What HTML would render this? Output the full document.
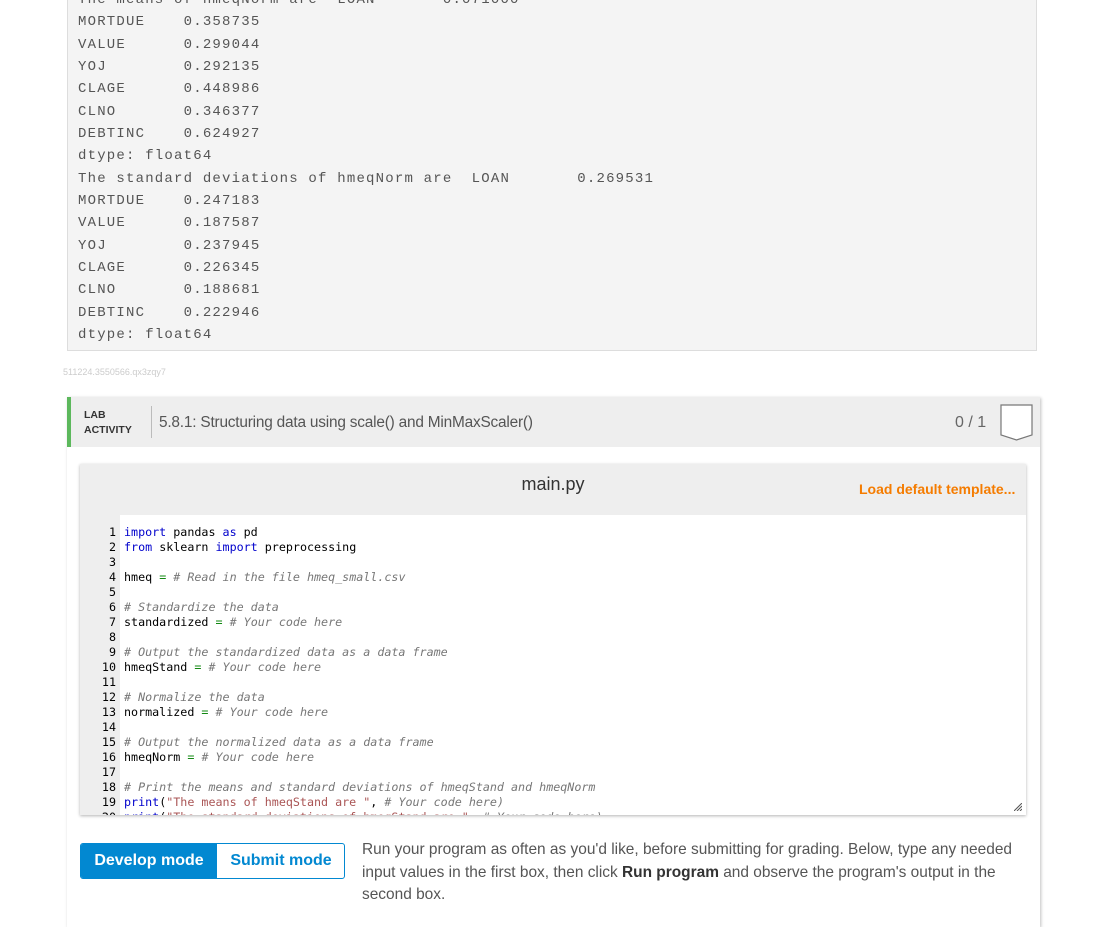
<!DOCTYPE html>
<html><head><meta charset="utf-8"><style>
*{box-sizing:border-box;margin:0;padding:0}
body{width:1101px;height:913px;overflow:hidden;background:#fff;font-family:"Liberation Sans",Roboto,sans-serif;position:relative}
.out{position:absolute;left:67px;top:-12px;width:970px;height:363px;background:#f4f4f4;border:1px solid #ddd;}
.out pre{position:absolute;left:10px;top:0;font-family:"Liberation Mono",monospace;font-size:14px;letter-spacing:1.2px;line-height:22.35px;color:#555;}
.id{position:absolute;left:63px;top:367px;font-size:9px;color:#ccc}
.lab{position:absolute;left:67px;top:397px;width:973px;height:530px;background:#fff;box-shadow:1px 1px 3px rgba(0,0,0,.25)}
.labh{height:50px;background:#eee;border-left:4px solid #5cb85c;position:relative}
.lbl{position:absolute;left:13px;top:11px;font-size:10.5px;font-weight:bold;color:#333;line-height:15px}
.sep{position:absolute;left:80px;top:9px;width:1px;height:32px;background:#bbb}
.title{position:absolute;left:88px;top:17px;font-size:15.4px;color:#555;letter-spacing:-0.2px}
.score{position:absolute;left:884px;top:17px;font-size:16px;color:#666}
.badge{position:absolute;left:929px;top:7px}
.ed{position:absolute;left:13px;top:67px;width:946px;height:351px;background:#eee;box-shadow:0 1px 3px rgba(0,0,0,.3)}
.edh{height:51px;position:relative}
.fn{position:absolute;left:0;right:0;top:10px;text-align:center;font-size:18px;color:#333}
.ld{position:absolute;left:779px;top:17px;font-size:14px;font-weight:bold;color:#f57c00}
.code{position:absolute;left:0;top:51px;width:946px;height:300px;background:#fff;overflow:hidden}
.code pre{position:absolute;top:0;padding-top:10px;font-family:"DejaVu Sans Mono",monospace;font-size:11.7px;line-height:15px;color:#000}
.ln{left:0;width:40px;height:300px;padding-right:4px;text-align:right;color:#222;background:#eee}
.src{left:44px}
.k{color:#00c}.c{color:#777;font-style:italic}.o{color:#181}.s{color:#a55}
.btns{position:absolute;left:13px;top:446px;width:265px;height:36px;border:1px solid #0288d1;border-radius:3px;overflow:hidden;font-size:16px;font-weight:bold}
.b1{position:absolute;left:0;top:0;width:136px;height:34px;background:#0288d1;color:#fff;text-align:center;line-height:34px}
.b2{position:absolute;left:136px;top:0;width:128px;height:34px;color:#0288d1;text-align:center;line-height:34px}
.desc{position:absolute;left:295px;top:442px;white-space:nowrap;font-size:15.45px;line-height:22.5px;color:#555}
</style></head><body>
<div class="out"><pre>The means of hmeqNorm are  LOAN       0.071000
MORTDUE    0.358735
VALUE      0.299044
YOJ        0.292135
CLAGE      0.448986
CLNO       0.346377
DEBTINC    0.624927
dtype: float64
The standard deviations of hmeqNorm are  LOAN       0.269531
MORTDUE    0.247183
VALUE      0.187587
YOJ        0.237945
CLAGE      0.226345
CLNO       0.188681
DEBTINC    0.222946
dtype: float64</pre></div>
<div class="id">511224.3550566.qx3zqy7</div>
<div class="lab">
 <div class="labh">
  <div class="lbl">LAB<br>ACTIVITY</div><div class="sep"></div>
  <div class="title">5.8.1: Structuring data using scale() and MinMaxScaler()</div>
  <div class="score">0 / 1</div>
  <svg class="badge" width="34" height="38" viewBox="0 0 34 38"><path d="M1 1H32V31L16.5 36L1 31Z" fill="#fff" stroke="#777" stroke-width="1.2"/></svg>
 </div>
 <div class="ed">
  <div class="edh"><div class="fn">main.py</div><div class="ld">Load default template...</div></div>
  <div class="code">
<pre class="ln">1
2
3
4
5
6
7
8
9
10
11
12
13
14
15
16
17
18
19
20</pre>
<pre class="src"><span class="k">import</span> pandas <span class="k">as</span> pd
<span class="k">from</span> sklearn <span class="k">import</span> preprocessing

hmeq <span class="o">=</span> <span class="c"># Read in the file hmeq_small.csv</span>

<span class="c"># Standardize the data</span>
standardized <span class="o">=</span> <span class="c"># Your code here</span>

<span class="c"># Output the standardized data as a data frame</span>
hmeqStand <span class="o">=</span> <span class="c"># Your code here</span>

<span class="c"># Normalize the data</span>
normalized <span class="o">=</span> <span class="c"># Your code here</span>

<span class="c"># Output the normalized data as a data frame</span>
hmeqNorm <span class="o">=</span> <span class="c"># Your code here</span>

<span class="c"># Print the means and standard deviations of hmeqStand and hmeqNorm</span>
<span class="k">print</span>(<span class="s">"The means of hmeqStand are "</span>, <span class="c"># Your code here)</span>
<span class="k">print</span>(<span class="s">"The standard deviations of hmeqStand are "</span>, <span class="c"># Your code here)</span></pre>
  <svg style="position:absolute;right:4px;bottom:4px" width="8" height="8"><path d="M8 0L0 8M8 3L3 8M8 6L6 8" stroke="#555" stroke-width="1"/></svg>
  </div>
 </div>
 <div class="btns"><div class="b1">Develop mode</div><div class="b2">Submit mode</div></div>
 <div class="desc">Run your program as often as you'd like, before submitting for grading. Below, type any needed<br>input values in the first box, then click <b style="color:#333">Run program</b> and observe the program's output in the<br>second box.</div>
</div>
</body></html>
